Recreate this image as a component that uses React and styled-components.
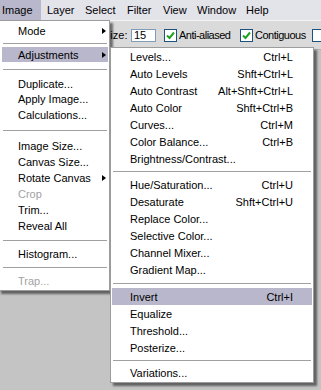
import styled, { createGlobalStyle } from "styled-components";

const GlobalStyle = createGlobalStyle`
  html, body {
    margin: 0;
    padding: 0;
    background: #c4c4c4;
  }
  * {
    box-sizing: border-box;
  }
`;

const Screen = styled.div`
  position: relative;
  display: flex;
  flex-direction: column;
  width: 321px;
  height: 390px;
  overflow: hidden;
  font-family: "Liberation Sans", Arial, sans-serif;
  font-size: 11px;
  color: #000;
  background: #c4c4c4;
`;

const MenuBar = styled.div`
  display: flex;
  height: 20px;
  background: #e3e3ea;
  flex-shrink: 0;
`;

const MenuTitle = styled.div`
  display: flex;
  align-items: center;
  flex-shrink: 0;
  width: ${p => p.w}px;
  padding-left: ${p => p.pl}px;
  height: 20px;
  background: ${p => (p.active ? "#b8b7cb" : "transparent")};
  white-space: nowrap;
`;

const OptionsBar = styled.div`
  display: flex;
  align-items: center;
  height: 30px;
  padding-left: 103px;
  background: #dadada;
  border-top: 1px solid #f4f4f4;
  border-bottom: 1px solid #b4b4b4;
  flex-shrink: 0;
  white-space: nowrap;
`;

const Label = styled.span`
  flex-shrink: 0;
  width: 28px;
`;

const NumberBox = styled.div`
  flex-shrink: 0;
  width: 25px;
  height: 13px;
  padding-left: 2px;
  line-height: 11px;
  background: #fff;
  border: 1px solid #7f9db9;
  margin-right: 8px;
`;

const CheckGroup = styled.div`
  display: flex;
  align-items: center;
  flex-shrink: 0;
  gap: 2px;
  width: ${p => p.w}px;
  letter-spacing: -0.5px;
`;

const Box = styled.div`
  width: 13px;
  height: 13px;
  flex-shrink: 0;
  background: #fff;
  border: 1px solid #1c5180;
  display: flex;
  align-items: center;
  justify-content: center;
`;

const Workspace = styled.div`
  flex: 1;
  background: #c4c4c4;
`;

const Dropdown = styled.div`
  position: absolute;
  top: 20px;
  left: -2px;
  width: 112px;
  padding: 2px 0;
  background: #fff;
  border: 1px solid #9c9c9c;
  box-shadow: 3px 3px 2px rgba(0, 0, 0, 0.5);
`;

const Submenu = styled.div`
  position: absolute;
  top: 47px;
  left: 110px;
  width: 204px;
  padding: 0 0 1px;
  background: #fff;
  border: 1px solid #9c9c9c;
  box-shadow: 3px 3px 2px rgba(0, 0, 0, 0.5);
`;

const Item = styled.div`
  display: flex;
  align-items: center;
  height: ${p => p.h}px;
  margin: ${p => p.inset};
  padding-left: ${p => p.pl}px;
  padding-right: ${p => p.pr}px;
  color: ${p => (p.disabled ? "#a2a2a2" : "#000")};
  background: ${p => (p.active ? "#b8b7cb" : "transparent")};
  white-space: nowrap;
`;

const ItemLabel = styled.span`
  flex: 1;
`;

const Shortcut = styled.span`
  text-align: right;
`;

const Arrow = styled.span`
  width: 0;
  height: 0;
  border-top: 3.5px solid transparent;
  border-bottom: 3.5px solid transparent;
  border-left: 4px solid #000;
`;

const Separator = styled.div`
  display: flex;
  align-items: center;
  height: ${p => p.h}px;
  margin: ${p => p.inset};
  &::before {
    content: "";
    flex: 1;
    height: 1px;
    background: #a0a0a0;
  }
`;

const titles = [
  { t: "Image", w: 41, pl: 2, active: true },
  { t: "Layer", w: 39, pl: 6 },
  { t: "Select", w: 41, pl: 5 },
  { t: "Filter", w: 37, pl: 6 },
  { t: "View", w: 34, pl: 5 },
  { t: "Window", w: 48, pl: 5 },
  { t: "Help", w: 40, pl: 6 },
];

const imageMenu = [
  { t: "Mode", h: 16, arrow: true },
  { sep: 8 },
  { t: "Adjustments", h: 15, arrow: true, active: true },
  { sep: 14 },
  { t: "Duplicate...", h: 15.5 },
  { t: "Apply Image...", h: 15.5 },
  { t: "Calculations...", h: 15.5 },
  { sep: 15 },
  { t: "Image Size...", h: 16 },
  { t: "Canvas Size...", h: 16 },
  { t: "Rotate Canvas", h: 16, arrow: true },
  { t: "Crop", h: 16, disabled: true },
  { t: "Trim...", h: 16 },
  { t: "Reveal All", h: 16 },
  { sep: 13 },
  { t: "Histogram...", h: 14 },
  { sep: 13 },
  { t: "Trap...", h: 14, disabled: true },
];

const adjustments = [
  { t: "Levels...", k: "Ctrl+L" },
  { t: "Auto Levels", k: "Shft+Ctrl+L" },
  { t: "Auto Contrast", k: "Alt+Shft+Ctrl+L" },
  { t: "Auto Color", k: "Shft+Ctrl+B" },
  { t: "Curves...", k: "Ctrl+M" },
  { t: "Color Balance...", k: "Ctrl+B" },
  { t: "Brightness/Contrast..." },
  { sep: 9 },
  { t: "Hue/Saturation...", k: "Ctrl+U" },
  { t: "Desaturate", k: "Shft+Ctrl+U" },
  { t: "Replace Color..." },
  { t: "Selective Color..." },
  { t: "Channel Mixer..." },
  { t: "Gradient Map..." },
  { sep: 10 },
  { t: "Invert", k: "Ctrl+I", active: true },
  { t: "Equalize" },
  { t: "Threshold..." },
  { t: "Posterize..." },
  { sep: 8 },
  { t: "Variations..." },
];

const Check = () => (
  <svg width="9" height="9" viewBox="0 0 9 9">
    <path d="M1 4.5 L3.5 7 L8 1.5" fill="none" stroke="#21a121" strokeWidth="2" />
  </svg>
);

export default function App() {
  return (
    <>
      <GlobalStyle />
      <Screen>
        <MenuBar>
          {titles.map(m => (
            <MenuTitle key={m.t} w={m.w} pl={m.pl} active={m.active}>
              {m.t}
            </MenuTitle>
          ))}
        </MenuBar>

        <OptionsBar>
          <Label>Size:</Label>
          <NumberBox>15</NumberBox>
          <CheckGroup w={76}>
            <Box><Check /></Box>
            <span>Anti-aliased</span>
          </CheckGroup>
          <CheckGroup w={72}>
            <Box><Check /></Box>
            <span>Contiguous</span>
          </CheckGroup>
          <CheckGroup w={20}>
            <Box />
          </CheckGroup>
        </OptionsBar>

        <Workspace />

        <Dropdown>
          {imageMenu.map((m, i) =>
            m.sep ? (
              <Separator key={i} h={m.sep} inset="0 2px 0 4px" />
            ) : (
              <Item
                key={i}
                h={m.h}
                inset="0 1px 0 3px"
                pl={16}
                pr={2}
                active={m.active}
                disabled={m.disabled}
              >
                <ItemLabel>{m.t}</ItemLabel>
                {m.arrow && <Arrow />}
              </Item>
            )
          )}
        </Dropdown>

        <Submenu>
          {adjustments.map((m, i) =>
            m.sep ? (
              <Separator key={i} h={m.sep} inset="0 2px" />
            ) : (
              <Item
                key={i}
                h={17}
                inset="0 1px"
                pl={18}
                pr={19}
                active={m.active}
              >
                <ItemLabel>{m.t}</ItemLabel>
                {m.k && <Shortcut>{m.k}</Shortcut>}
              </Item>
            )
          )}
        </Submenu>
      </Screen>
    </>
  );
}
